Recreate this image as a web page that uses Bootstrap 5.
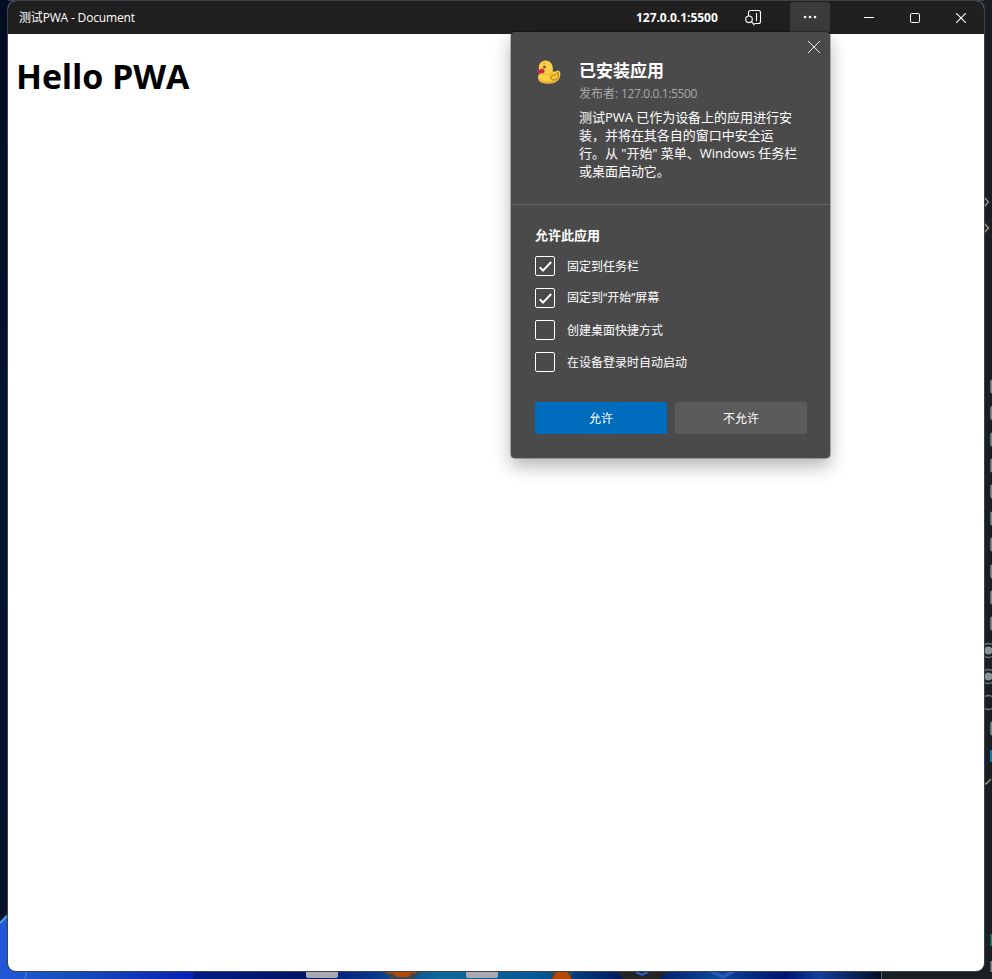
<!DOCTYPE html>
<html lang="zh-CN">
<head>
<meta charset="utf-8">
<meta name="viewport" content="width=device-width, initial-scale=1">
<title>测试PWA - Document</title>
<link href="https://cdn.jsdelivr.net/npm/bootstrap@5.3.0/dist/css/bootstrap.min.css" rel="stylesheet">
<style>
body{width:992px;height:979px;background:#1a1f24;font-family:"Open Sans","Noto Sans CJK SC",sans-serif;font-size:12px;line-height:18px;color:#fff}
.desktop{inset:0;z-index:0}
.app-window{width:976px;height:970px;margin:1px 0 0 8px;border-radius:8px;background:#fff;z-index:1;box-shadow:0 0 0 1px #3b424b}
.titlebar{height:33px;background:#202020;border-radius:8px 8px 0 0;padding-left:11px}
.app-title{letter-spacing:-.17px}
.origin{font-weight:700;letter-spacing:-.04px;width:82px;margin-right:17px}
.tool{width:36px;height:30px}
.more{width:40px;height:30px;background:#3b3b3b;margin:0 16px 1px 19px;border-radius:3px 3px 0 0}
.caption{width:46px;height:33px}
.page-heading{font-size:34px;line-height:46px;font-weight:700;color:#000;margin:19px 0 0 8px;letter-spacing:-.12px}
.prompt{left:503px;top:31px;width:319px;height:426px;background:#4a4a4a;border-radius:4px;z-index:3;box-shadow:0 0 0 1px rgba(0,0,0,.25),0 8px 18px rgba(0,0,0,.3)}
.prompt-top{height:173px;border-bottom:1px solid #666;padding:27px 0 0 24px}
.dismiss{top:8px;right:9px;width:14px;height:14px;line-height:0}
.duck{width:28px;height:28px;margin-right:16px}
.prompt-title{font-size:17px;line-height:24px;font-weight:700;margin:0}
.publisher{color:#a9a9a9;line-height:20px;margin-top:1px;letter-spacing:-.36px}
.publisher-name{letter-spacing:0}
.message{font-size:13px;line-height:18px;margin:4px 0 0;letter-spacing:-.03px;white-space:nowrap}
.prompt-body{padding:21px 23px 0 24px}
.group-label{font-size:13px;font-weight:700;line-height:18px;margin:0}
.options{margin-top:12px;gap:12px}
.option{height:20px;gap:12px}
.option span{padding-top:2px}
.option .quoted{padding-top:0}
.option .form-check-input{width:20px;height:20px;margin:0;border:1px solid #fff;border-radius:2px;background-color:transparent;float:none;flex:none;background-size:18px;box-shadow:none}
.option .form-check-input:checked{background-image:url("data:image/svg+xml,%3Csvg xmlns='http://www.w3.org/2000/svg' viewBox='0 0 18 18'%3E%3Cpath d='M3.800 10.200l3.200 3.400 8.200-8.600' fill='none' stroke='white' stroke-width='2'/%3E%3C/svg%3E");background-color:transparent}
.prompt-actions{margin-top:30px;gap:8px}
.prompt-actions .btn{width:132px;height:32px;border:0;border-radius:2px;font-size:12px;line-height:18px;padding:1px 0 0;color:#fff}
.btn-allow{background:#006cbe}.btn-deny{background:#5b5b5b}
</style>
<script src="https://cdn.jsdelivr.net/npm/bootstrap@5.3.0/dist/js/bootstrap.bundle.min.js"></script>
</head>
<body class="position-relative overflow-hidden">
<svg class="desktop position-absolute" width="992" height="979" viewBox="0 0 992 979" aria-hidden="true">
<defs>
<linearGradient id="night" x1="0" y1="0" x2="0" y2="1"><stop offset="0" stop-color="#030d22"/><stop offset=".5" stop-color="#03152f"/><stop offset="1" stop-color="#07142c"/></linearGradient>
<linearGradient id="bloom"><stop offset="0" stop-color="#2257d8"/><stop offset=".35" stop-color="#1650bd"/><stop offset="1" stop-color="#0822b5"/></linearGradient>
<linearGradient id="dock"><stop offset="0" stop-color="#001d86"/><stop offset=".15" stop-color="#021566"/><stop offset=".25" stop-color="#07318a"/><stop offset=".36" stop-color="#11699a"/><stop offset=".5" stop-color="#075995"/><stop offset=".64" stop-color="#001154"/><stop offset=".76" stop-color="#0c4797"/><stop offset=".86" stop-color="#001373"/><stop offset=".91" stop-color="#123f99"/><stop offset="1" stop-color="#050e24"/></linearGradient>
</defs>
<rect width="12" height="925" fill="url(#night)"/>
<path d="M0 922L8 914V979H0z" fill="#2257d8"/><path d="M0 923L9 914" stroke="#46a5e5" stroke-width="2"/>
<rect y="960" width="193" height="19" fill="url(#bloom)"/><path d="M27 970l-2 9" stroke="#2875cf" stroke-width="2"/>
<rect x="193" y="970" width="688" height="9" fill="url(#dock)"/>
<path d="M218 971.5h48" stroke="#526a78"/>
<rect x="306" y="965" width="32" height="13" rx="2" fill="#aaa9b1"/><rect x="466" y="965" width="32" height="13" rx="2" fill="#aaa9b1"/>
<path d="M380 971l7 4 3 4h24l4-4 6-4z" fill="#344858"/><path d="M386 971l3 3 3-1 5 4h11l4-4 3 1 3-3z" fill="#b64800"/>
<path d="M550 971h24l-4 8h-17z" fill="#344858"/><path d="M557 971h9l6 8h-20z" fill="#b64800"/>
<path d="M618 970h48q0 6-7 9h-36q-5-4-5-9" fill="#252526"/><path d="M636 972l6 3 6-3" fill="none" stroke="#2864cf" stroke-width="2"/>
<path d="M707 971h8l8 4 7-4h8l-15 8z" fill="#2858b4"/><path d="M862 971.5h19" stroke="#8f7547"/><path d="M881.5 971v8" stroke="#566066"/>
<path d="M8 .5h976" stroke="#34445b"/><path d="M856 .5h25" stroke="#4761b7"/><path d="M904 .5h24" stroke="#5a6ba2"/>
<g fill="none" stroke="#a99b8b" stroke-width="1.3"><path d="M984 197l4.500 5-4.500 5M984 223l4.500 5-4.500 5"/></g>
<g fill="#17191d" stroke="#7b8f93" stroke-width="2">
<rect x="991.300" y="380.500" width="10" height="12" rx="1"/><rect x="991.300" y="407" width="10" height="12" rx="1"/><rect x="991.300" y="433.500" width="10" height="12" rx="1"/><rect x="991.300" y="459.500" width="10" height="12" rx="1"/><rect x="991.300" y="485.500" width="10" height="12" rx="1"/><rect x="991.300" y="512.500" width="10" height="12" rx="1"/><rect x="991.300" y="538.500" width="10" height="12" rx="1"/><rect x="991.300" y="565.500" width="10" height="12" rx="1"/><rect x="991.300" y="591.500" width="10" height="12" rx="1"/><rect x="991.300" y="617.500" width="10" height="12" rx="1"/><rect x="991.300" y="722.500" width="10" height="12" rx="1"/></g>
<g fill="none" stroke="#687a7e" stroke-width="1.3"><circle cx="988.500" cy="650.500" r="7"/><circle cx="988.500" cy="676.500" r="7"/><circle cx="988.500" cy="702.500" r="7"/></g>
<g fill="#87959a"><circle cx="988.500" cy="650.500" r="4"/><circle cx="988.500" cy="676.500" r="4"/></g>
<rect x="990" y="750" width="2" height="12" fill="#087cae"/><path d="M984 783.500l2 .5 5-5" fill="none" stroke="#a69c91" stroke-width="1.300"/><rect x="990.500" y="934" width="2" height="12" fill="#168878"/><rect x="990.500" y="961" width="2" height="11" fill="#7d8d94"/>
</svg>
<main class="app-window position-relative">
<header class="titlebar d-flex align-items-center">
<span class="app-title me-auto">测试PWA - Document</span>
<span class="origin text-nowrap">127.0.0.1:5500</span>
<span class="tool d-flex align-items-center justify-content-center"><svg width="18" height="18" viewBox="0 0 18 18" fill="none" stroke="#fff" stroke-width="1.1"><path d="M4.500 7V3.500a2 2 0 0 1 2-2h8a2 2 0 0 1 2 2v9a2 2 0 0 1-2 2h-4M12.500 4v8"/><circle cx="5" cy="10.300" r="3.300"/><path d="M7.400 12.700L10.500 16"/></svg></span>
<span class="more d-flex align-items-center justify-content-center"><svg width="16" height="4" fill="#fff"><circle cx="3" cy="2" r="1.3"/><circle cx="8" cy="2" r="1.3"/><circle cx="13" cy="2" r="1.3"/></svg></span>
<span class="caption d-flex align-items-center justify-content-center"><svg width="10" height="10" stroke="#fff"><path d="M0 4.500h10"/></svg></span>
<span class="caption d-flex align-items-center justify-content-center"><svg width="10" height="10" fill="none" stroke="#fff"><rect x=".5" y=".5" width="9" height="9" rx="1.200"/></svg></span>
<span class="caption d-flex align-items-center justify-content-center"><svg width="10" height="10" stroke="#fff" stroke-width="1.1"><path d="M0 0l10 10M10 0L0 10"/></svg></span>
</header>
<h1 class="page-heading">Hello PWA</h1>
<section class="prompt position-absolute">
<div class="prompt-top d-flex align-items-start position-relative">
<span class="dismiss position-absolute"><svg width="14" height="14" stroke="#e8e8e8"><path d="M1 1l12 12M13 1L1 13"/></svg></span>
<svg class="duck flex-shrink-0" viewBox="0 0 28 28">
<path d="M5 14.500C2.500 16 2.300 20.500 5 22.800c2.500 2.100 12.500 2.500 16.500-.3 3.300-2.300 4.400-6 3.700-9-.4-2-2.500-2.600-4-1.500-1.200.9-2.300.6-3.500.5C18.800 6.500 16 1.500 10.800 1.500 6.600 1.500 3.800 4.800 3.800 8.500c0 2.500.8 4.500 1.200 6z" fill="#fbd044"/>
<path d="M3.500 18.500c.3 4.200 3.800 6.200 9.500 6.200 7 0 11.500-2.700 12.300-8.700-2 4.400-6.200 6.300-12 6.300-4.800 0-8.300-.8-9.800-3.800z" fill="#e8b337"/>
<path d="M15.500 17.500c2-2 5.500-1.200 7.500-4.500 1.500 4-.2 8-4 8-2 0-4-1.500-3.500-3.500z" fill="#f8c437" stroke="#9c7428"/>
<path d="M7 15c3.500 1.700 7.500 1 10.500-2" fill="none" stroke="#e2a936"/>
<path d="M6.500 9.500C5.300 10 3.800 11.500 2.200 11.200c-.3 2.500 1.600 3.600 4.300 3.300 2.400-.2 3.400-1.200 3.200-2.500-.2-1.500-1.600-2.700-3.200-2.500z" fill="#e02c4f"/><path d="M3 12.500q3 1 6-.3" fill="none" stroke="#a91c39" stroke-width=".7"/><circle cx="9.500" cy="8" r="1.500" fill="#795b30"/><path d="M8 5q1.200-.8 2.300-.2" fill="none" stroke="#b88c28" stroke-width=".7"/>
</svg>
<div>
<h2 class="prompt-title">已安装应用</h2>
<div class="publisher"><span class="publisher-name">发布者:</span> 127.0.0.1:5500</div>
<p class="message">测试PWA 已作为设备上的应用进行安<br>装，并将在其各自的窗口中安全运<br>行。从 "开始" 菜单、Windows 任务栏<br>或桌面启动它。</p>
</div>
</div>
<div class="prompt-body">
<h3 class="group-label">允许此应用</h3>
<div class="options d-flex flex-column">
<label class="option d-flex align-items-center"><input class="form-check-input" type="checkbox" checked><span>固定到任务栏</span></label>
<label class="option d-flex align-items-center"><input class="form-check-input" type="checkbox" checked><span class="quoted">固定到“开始”屏幕</span></label>
<label class="option d-flex align-items-center"><input class="form-check-input" type="checkbox"><span>创建桌面快捷方式</span></label>
<label class="option d-flex align-items-center"><input class="form-check-input" type="checkbox"><span>在设备登录时自动启动</span></label>
</div>
<div class="prompt-actions d-flex"><button class="btn btn-allow" type="button">允许</button><button class="btn btn-deny" type="button">不允许</button></div>
</div>
</section>
</main>
</body>
</html>
